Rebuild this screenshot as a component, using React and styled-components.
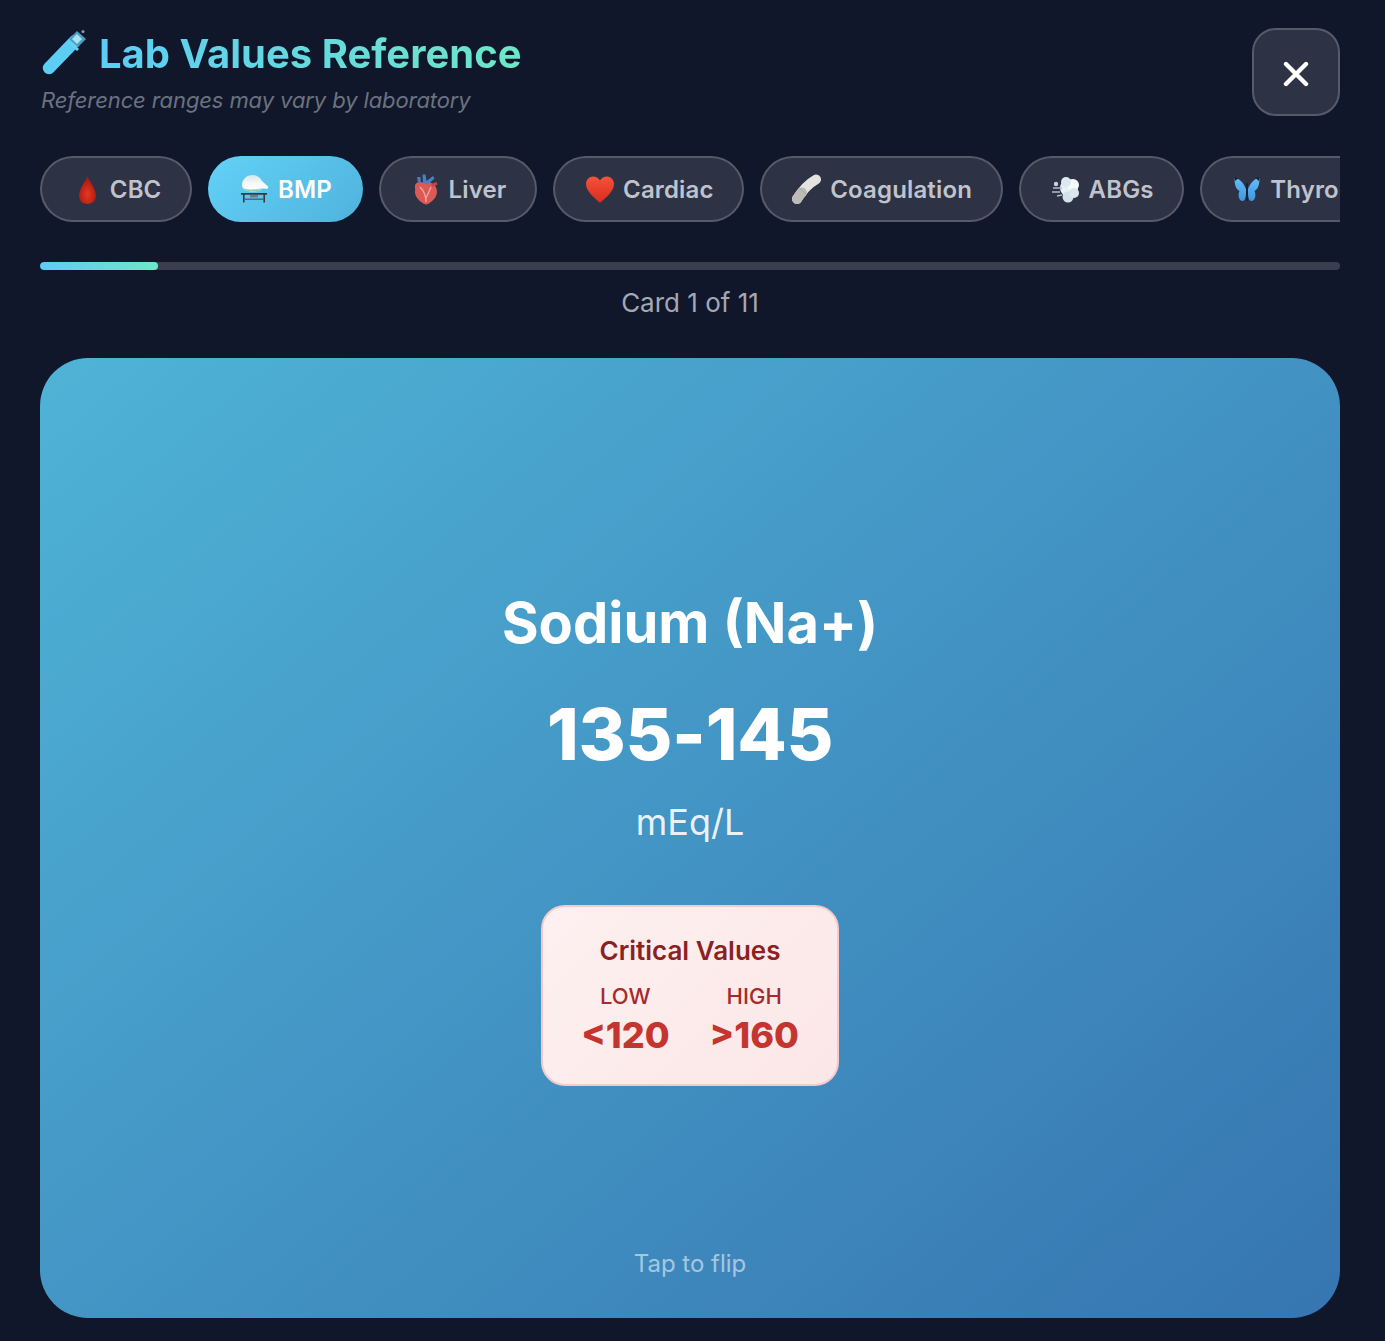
import React from 'react'
import styled, { createGlobalStyle } from 'styled-components'

const GlobalStyle = createGlobalStyle`
	* {
		box-sizing: border-box;
	}
	html, body {
		margin: 0;
		padding: 0;
		background: #10172a;
	}
	body {
		font-family: Inter, 'Liberation Sans', sans-serif;
		-webkit-font-smoothing: antialiased;
	}
`

// EMOJI STYLE ICONS
const TubeIcon = () => (
	<svg width='47' height='52' viewBox='0 0 47 52'>
		<path d='M9 40 L35 13' stroke='#5ccdf3' strokeWidth='12.5' strokeLinecap='round' fill='none' />
		<path d='M29 11 L37 3 L46 11 L38 19 Z' fill='#4a9fc0' />
		<path d='M32 11 L37 6 L42 11 L37 16 Z' fill='#a9e2f3' />
		<path d='M30 13 L39 21 L37 23 L28 15 Z' fill='#62d3f4' />
		<circle cx='43' cy='3.5' r='1.6' fill='#7e98a8' />
	</svg>
)

const DropIcon = () => (
	<svg width='31' height='32' viewBox='0 0 31 32'>
		<defs>
			<radialGradient id='drop' cx='0.5' cy='0.65' r='0.6'>
				<stop offset='0' stopColor='#e33a22' />
				<stop offset='1' stopColor='#a9150e' />
			</radialGradient>
		</defs>
		<path d='M16.5 3 C18 8 25 15 25 23 C25 28 21 31 16.5 31 C12 31 8 28 8 23 C8 15 15 8 16.5 3Z' fill='url(#drop)' />
	</svg>
)

const FlaskIcon = () => (
	<svg width='31' height='32' viewBox='0 0 31 32'>
		<defs>
			<linearGradient id='bowl' x1='0' y1='0' x2='0' y2='1'>
				<stop offset='0' stopColor='#d4e6ea' />
				<stop offset='0.5' stopColor='#f6faf9' />
				<stop offset='1' stopColor='#ffffff' />
			</linearGradient>
		</defs>
		<path d='M3 12 C3 6 8 2 13.5 2 C18 2 21 4.5 23 8 L29 13.5 C30 15.5 28 16.5 26 15.5 L23.5 15.5 C21 18 18 18.5 14 18.5 C9 18.5 3 17 3 12Z' fill='url(#bowl)' />
		<path d='M4 15 C8 17 19 17 23.5 15 C21 18 18 18.5 14 18.5 C9 18.5 5.5 17.5 4 15Z' fill='#8fd0ac' />
		<path d='M2 20 L28 20 L28 21.8 L26 21.8 L26 29.5 L24.4 29.5 L24.4 21.8 L5.6 21.8 L5.6 29.5 L4 29.5 L4 21.8 L2 21.8Z' fill='#343b45' />
		<rect x='5' y='25.5' width='20' height='1.4' fill='#56606b' />
		<rect x='11' y='22' width='8' height='2.4' fill='#6f7b84' />
	</svg>
)

const AnatomicalHeartIcon = () => (
	<svg width='31' height='32' viewBox='0 0 31 32'>
		<path d='M5 15 C4 10 9 8 12 9.5 C15 8 20 8.5 23 11 C27.5 14 28 20 25.5 24 C23 28 19 31 16 31.5 C12 30.5 7 26 5.5 22 C4.5 19 5.5 17 5 15Z' fill='#dc5a55' />
		<path d='M10 14 C14 18 16 23 16 29 M21 14 C19 19 17.5 22 16 25' stroke='#f2a8a0' strokeWidth='1.3' fill='none' />
		<path d='M13 10 L12.5 1.5 L15.5 1.5 L16.5 8 L23 3 L24.5 5.5 L18 11.5 Z' fill='#4a80c4' />
		<path d='M8 10 L7 4 L10.5 4 L11 9.5 Z' fill='#4f78b8' />
		<path d='M21 11 L26.5 9 L27.5 11.5 L22.5 14 Z' fill='#c9434a' />
	</svg>
)

const HeartIcon = () => (
	<svg width='31' height='32' viewBox='0 0 31 32'>
		<defs>
			<linearGradient id='heart' x1='0' y1='0' x2='0' y2='1'>
				<stop offset='0' stopColor='#f5523c' />
				<stop offset='1' stopColor='#d92c1c' />
			</linearGradient>
		</defs>
		<path d='M16 30 C12 26 2 19 2 11 C2 6.5 5.5 3.5 9 3.5 C12 3.5 14.5 5 16 7.5 C17.5 5 20 3.5 23 3.5 C26.5 3.5 30 6.5 30 11 C30 19 20 26 16 30Z' fill='url(#heart)' />
	</svg>
)

const BandageIcon = () => (
	<svg width='31' height='32' viewBox='0 0 31 32'>
		<path d='M6 26 C11 18 17 11 25 6.5' stroke='#e4e3e0' strokeWidth='10' strokeLinecap='round' fill='none' />
		<path d='M6 26 C7.5 23.5 9 21.5 11 19.5' stroke='#bcbbb7' strokeWidth='10' strokeLinecap='round' fill='none' />
		<path d='M8.5 15 L15 21.5' stroke='#a5a4a0' strokeWidth='1' />
	</svg>
)

const DashIcon = () => (
	<svg width='31' height='32' viewBox='0 0 31 32'>
		<defs>
			<filter id='soft'>
				<feGaussianBlur stdDeviation='0.7' />
			</filter>
		</defs>
		<g filter='url(#soft)'>
			<circle cx='19' cy='15' r='9' fill='#e6f0f5' />
			<circle cx='23' cy='12' r='6' fill='#f5fafc' />
			<circle cx='16' cy='9' r='5' fill='#dbe8ee' />
			<circle cx='18' cy='24' r='5.5' fill='#d3e2ea' />
			<circle cx='24' cy='20' r='5' fill='#dbe7ed' />
			<circle cx='6' cy='11' r='2.2' fill='#c6d4dc' />
			<path d='M3 15 L12 15 M2 19 L10 19 M7 23 L12 22' stroke='#aebdc6' strokeWidth='1.6' />
		</g>
	</svg>
)

const ButterflyIcon = () => (
	<svg width='31' height='32' viewBox='0 0 31 32'>
		<defs>
			<linearGradient id='wing' x1='0' y1='0' x2='0' y2='1'>
				<stop offset='0' stopColor='#62bdf5' />
				<stop offset='1' stopColor='#3d97e2' />
			</linearGradient>
		</defs>
		<path d='M15 16 C13 11 9 5 3.5 5 C3.5 11 4.5 16 8.5 18 C6.5 22 8 28 11.5 28 C14.5 28 15 23 15 19Z' fill='url(#wing)' />
		<path d='M17 16 C19 11 23 5 28.5 5 C28.5 11 27.5 16 23.5 18 C25.5 22 24 28 20.5 28 C17.5 28 17 23 17 19Z' fill='url(#wing)' />
		<rect x='15.2' y='10' width='1.6' height='18' rx='0.8' fill='#171c28' />
		<path d='M3.5 4.5 L7.5 5 L4 8Z M28.5 4.5 L24.5 5 L28 8Z' fill='#171c28' />
	</svg>
)

const TABS = [
	{ label: 'CBC', Icon: DropIcon },
	{ label: 'BMP', Icon: FlaskIcon, active: true },
	{ label: 'Liver', Icon: AnatomicalHeartIcon },
	{ label: 'Cardiac', Icon: HeartIcon },
	{ label: 'Coagulation', Icon: BandageIcon },
	{ label: 'ABGs', Icon: DashIcon },
	{ label: 'Thyroid', Icon: ButterflyIcon },
]

const App = () => {
	return (
		<Page>
			<GlobalStyle />
			<Header>
				<div>
					<TitleRow>
						<TubeIcon />
						<Title>Lab Values Reference</Title>
					</TitleRow>
					<Subtitle>Reference ranges may vary by laboratory</Subtitle>
				</div>
				<CloseButton aria-label='Close'>
					<svg width='26' height='26' viewBox='0 0 26 26'>
						<path d='M3 3 L23 23 M23 3 L3 23' stroke='#fff' strokeWidth='4.4' strokeLinecap='round' />
					</svg>
				</CloseButton>
			</Header>

			<TabBar>
				{TABS.map(({ label, Icon, active }) => (
					<Tab key={label} $active={active}>
						<Icon />
						{label}
					</Tab>
				))}
			</TabBar>

			<ProgressTrack>
				<ProgressFill style={{ width: `${(1 / 11) * 100}%` }} />
			</ProgressTrack>
			<ProgressLabel>Card 1 of 11</ProgressLabel>

			<Card>
				<CardName>Sodium (Na+)</CardName>
				<CardValue>135-145</CardValue>
				<CardUnit>mEq/L</CardUnit>
				<CriticalBox>
					<CriticalTitle>Critical Values</CriticalTitle>
					<CriticalGrid>
						<CriticalColumn>
							<CriticalLabel>LOW</CriticalLabel>
							<CriticalNumber>&lt;120</CriticalNumber>
						</CriticalColumn>
						<CriticalColumn>
							<CriticalLabel>HIGH</CriticalLabel>
							<CriticalNumber>&gt;160</CriticalNumber>
						</CriticalColumn>
					</CriticalGrid>
				</CriticalBox>
				<FlipHint>Tap to flip</FlipHint>
			</Card>
		</Page>
	)
}

export default App

// STYLED COMPONENTS
const Page = styled.div`
	width: 1385px;
	height: 1341px;
	padding: 28px 45px 23px 40px;
	background: #10172a;
	overflow: hidden;
`
const Header = styled.header`
	display: flex;
	justify-content: space-between;
	align-items: flex-start;
	height: 128px;
`
const TitleRow = styled.div`
	display: flex;
	align-items: center;
	gap: 12px;
	height: 52px;
`
const Title = styled.h1`
	margin: 0;
	font-size: 40px;
	font-weight: 700;
	line-height: 52px;
	background: linear-gradient(90deg, #5ccdf5, #6ee7c7);
	-webkit-background-clip: text;
	background-clip: text;
	color: transparent;
`
const Subtitle = styled.p`
	margin: 6px 0 0 1px;
	font-size: 22px;
	font-style: italic;
	letter-spacing: -0.1px;
	line-height: 28px;
	color: #6b7280;
`
const CloseButton = styled.button`
	display: flex;
	align-items: center;
	justify-content: center;
	width: 88px;
	height: 88px;
	padding: 4px 0 0;
	border: 2px solid rgba(255, 255, 255, 0.2);
	border-radius: 24px;
	background: #2d3244;
`
const TabBar = styled.nav`
	display: flex;
	gap: 16px;
	overflow: hidden;
`
const Tab = styled.div`
	display: flex;
	flex-shrink: 0;
	align-items: center;
	gap: 8px;
	height: 66px;
	padding: 0 28.8px;
	border: 2px solid ${(p) => (p.$active ? 'transparent' : 'rgba(255, 255, 255, 0.2)')};
	border-radius: 33px;
	background: ${(p) => (p.$active ? 'linear-gradient(135deg, #63d1f7, #4fb3dc)' : '#2d3244')};
	background-origin: border-box;
	color: ${(p) => (p.$active ? '#ffffff' : '#c0c3cc')};
	font-size: 24px;
	font-weight: 600;
	letter-spacing: 0.15px;
	white-space: nowrap;
`
const ProgressTrack = styled.div`
	height: 8px;
	margin-top: 40px;
	border-radius: 4px;
	background: #3a3f50;
	overflow: hidden;
`
const ProgressFill = styled.div`
	height: 100%;
	border-radius: 4px;
	background: linear-gradient(90deg, #5ccdf5, #6ee7c7);
`
const ProgressLabel = styled.div`
	height: 88px;
	padding-top: 16px;
	font-size: 26px;
	line-height: 34px;
	text-align: center;
	color: #a4a8b3;
`
const Card = styled.section`
	position: relative;
	display: flex;
	flex-direction: column;
	align-items: center;
	justify-content: center;
	height: 960px;
	padding-bottom: 2px;
	border-radius: 48px;
	background: linear-gradient(140deg, #4fb3d6, #3675b1);
	color: #fff;
`
const CardName = styled.h2`
	margin: 0;
	font-size: 56px;
	font-weight: 700;
	line-height: 68px;
`
const CardValue = styled.div`
	margin-top: 33px;
	font-size: 72px;
	font-weight: 800;
	letter-spacing: -0.3px;
	line-height: 88px;
`
const CardUnit = styled.div`
	margin-top: 22px;
	font-size: 36px;
	line-height: 44px;
	color: rgba(255, 255, 255, 0.9);
`
const CriticalBox = styled.div`
	width: 298px;
	height: 181px;
	margin-top: 61px;
	padding: 28px 0 0;
	border: 2px solid #f6c9cc;
	border-radius: 24px;
	background: linear-gradient(135deg, #fdf0f0, #fce7e7);
	text-align: center;
`
const CriticalTitle = styled.div`
	font-size: 26px;
	font-weight: 600;
	line-height: 32px;
	color: #8a2222;
`
const CriticalGrid = styled.div`
	display: flex;
	justify-content: center;
	gap: 40px;
	margin-top: 15px;
`
const CriticalColumn = styled.div`
	display: flex;
	flex-direction: column;
	align-items: center;
`
const CriticalLabel = styled.div`
	font-size: 22px;
	font-weight: 500;
	line-height: 28px;
	color: #a52a2a;
`
const CriticalNumber = styled.div`
	font-size: 36px;
	font-weight: 800;
	line-height: 50px;
	color: #c53530;
`
const FlipHint = styled.div`
	position: absolute;
	bottom: 39px;
	left: 0;
	right: 0;
	font-size: 24px;
	line-height: 30px;
	text-align: center;
	color: rgba(255, 255, 255, 0.55);
`
